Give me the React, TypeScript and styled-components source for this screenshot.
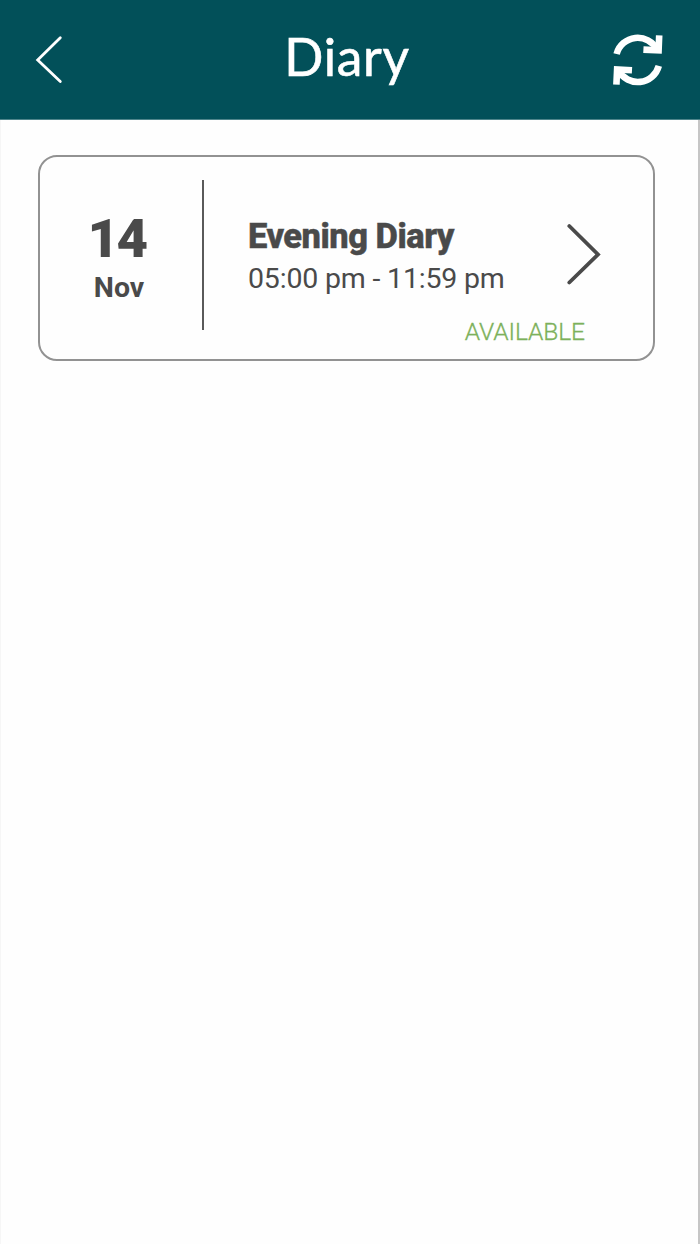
import React from "react";
import styled, { createGlobalStyle } from "styled-components";

const GlobalStyle = createGlobalStyle`
  * { box-sizing: border-box; }
  body { margin: 0; background: #fefefe; }
  button { padding: 0; border: 0; background: none; color: inherit; display: block; }
`;

const Screen = styled.div`
  height: 1244px;
  display: flex;
  flex-direction: column;
  font-family: Roboto, sans-serif;
  color: #4a4a4a;
`;

const Header = styled.header`
  height: 120px;
  flex: none;
  display: grid;
  grid-template-columns: 100px 1fr 100px;
  background: #025059;
  border-bottom: 1px solid #4e858b;
  color: #fff;
`;

const IconButton = styled.button`
  width: 100px;
  height: 119px;
`;

const Icon = styled.svg`
  display: block;
  fill: none;
  stroke: currentColor;
`;

const Title = styled.h1`
  margin: 0;
  padding-right: 6px;
  text-align: center;
  font: 400 51.5px/112px Lato, sans-serif;
  letter-spacing: 0.7px;
  -webkit-text-stroke: 0.6px currentColor;
`;

const Content = styled.main`
  flex: 1;
  padding: 35px 43px 0 37px;
  border-left: 1px solid #f6f6f6;
  border-right: 2px solid #c6c6c6;
`;

const Card = styled.article`
  width: 617px;
  height: 206px;
  display: flex;
  border: 2px solid #929292;
  border-radius: 19px;
`;

const DateColumn = styled.div`
  width: 164px;
  height: 150px;
  flex: none;
  margin-top: 23px;
  padding: 26px 4px 0 0;
  border-right: 2px solid #5a5a5a;
  text-align: center;
`;

const Day = styled.div`
  font-size: 54.5px;
  font-weight: 900;
  line-height: 64px;
  letter-spacing: -2.5px;
  padding-right: 5px;
`;

const Month = styled.div`
  font-size: 28.5px;
  font-weight: 700;
  line-height: 36px;
`;

const Details = styled.div`
  width: 320px;
  flex: none;
  padding: 58px 0 0 44px;
`;

const Name = styled.h2`
  margin: 0;
  font-size: 34.5px;
  font-weight: 800;
  line-height: 42px;
  letter-spacing: -0.5px;
  white-space: nowrap;
  -webkit-text-stroke: 0.5px currentColor;
`;

const Time = styled.div`
  font-size: 28.5px;
  line-height: 43px;
  letter-spacing: -0.18px;
  white-space: nowrap;
`;

const Status = styled.div`
  width: 337px;
  margin-top: 16px;
  text-align: right;
  font-size: 24.6px;
  font-weight: 300;
  line-height: 32px;
  letter-spacing: -0.1px;
  color: #7db15b;
  -webkit-text-stroke: 0.3px currentColor;
`;

const ArrowColumn = styled.div`
  padding: 64px 0 0 39px;
`;

export default function App() {
  return (
    <Screen>
      <GlobalStyle />
      <Header>
        <IconButton aria-label="Back">
          <Icon width="100" height="119" strokeWidth="2.8" strokeLinecap="round">
            <path d="M60.3 37.7L37.7 60L60.3 81.5" />
          </Icon>
        </IconButton>
        <Title>Diary</Title>
        <IconButton aria-label="Refresh">
          <Icon width="100" height="119" strokeWidth="6.6">
            <path d="M16.6 54A21.8 21.8 0 0 1 57 49.5" />
            <path d="M43.4 49.6L58.6 50.4L59.2 35.3" />
            <path d="M58.8 65.8A21.8 21.8 0 0 1 18.5 70.5" />
            <path d="M32 70.3L17.1 69.5L16.4 84.6" />
          </Icon>
        </IconButton>
      </Header>
      <Content>
        <Card>
          <DateColumn>
            <Day>14</Day>
            <Month>Nov</Month>
          </DateColumn>
          <Details>
            <Name>Evening Diary</Name>
            <Time>05:00 pm - 11:59 pm</Time>
            <Status>AVAILABLE</Status>
          </Details>
          <ArrowColumn>
            <Icon width="40" height="70" strokeWidth="3.8" strokeLinecap="round">
              <path d="M6.3 5L35 33.5L6.3 61.5" />
            </Icon>
          </ArrowColumn>
        </Card>
      </Content>
    </Screen>
  );
}
